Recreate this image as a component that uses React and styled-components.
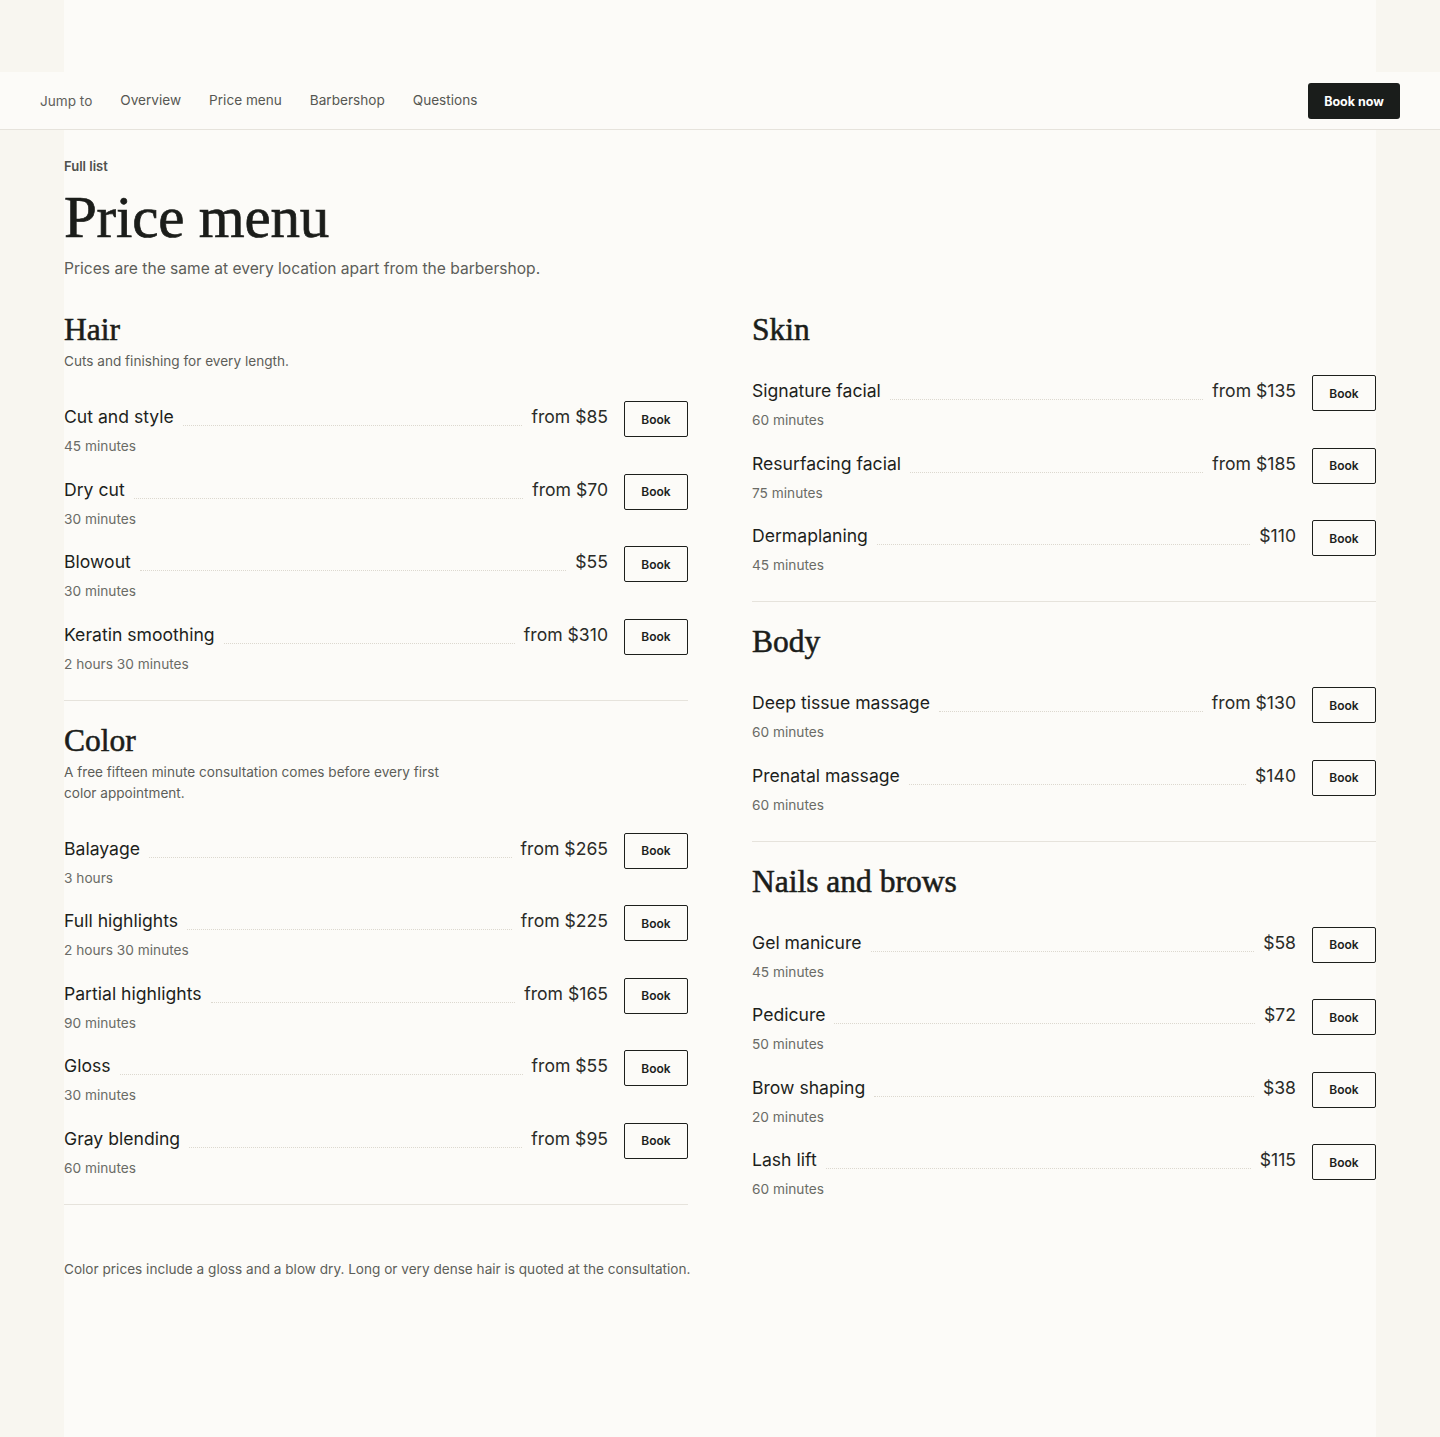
import React from "react";
import styled, { createGlobalStyle } from "styled-components";

const GlobalStyle = createGlobalStyle`
  html, body { margin: 0; padding: 0; }
  body {
    background: #f8f6f0;
    font-family: Inter, "Noto Sans", "Liberation Sans", sans-serif;
    color: #1d1f1c;
    -webkit-font-smoothing: antialiased;
  }
  * { box-sizing: border-box; }
`;

const Shell = styled.div`
  min-height: 100vh;
  display: flex;
  flex-direction: column;
`;

const TopBand = styled.div`
  width: 1312px;
  margin: 0 auto;
  height: 72px;
  background: #fcfbf8;
`;

const Nav = styled.nav`
  display: flex;
  align-items: center;
  justify-content: space-between;
  padding: 11px 40px 10px;
  background: #fcfbf8;
  border-bottom: 1px solid #e6e3dc;
`;

const NavLinks = styled.div`
  display: flex;
  align-items: center;
  gap: 28px;
  padding-bottom: 3px;
`;

const NavLink = styled.a`
  font-size: 13.6px;
  line-height: 20px;
  color: ${(p) => (p.$muted ? "#5f605b" : "#565752")};
  text-decoration: none;
  transform: translateY(${(p) => (p.$muted ? "1px" : "0")});
`;

const BookNow = styled.button`
  width: 92px;
  height: 36px;
  border: none;
  border-radius: 3px;
  background: #1a1d1b;
  color: #ffffff;
  font-family: inherit;
  font-size: 12.5px;
  font-weight: 700;
  cursor: pointer;
`;

const Main = styled.main`
  flex: 1;
  width: 1312px;
  margin: 0 auto;
  background: #fcfbf8;
  padding: 27px 0 120px;
`;

const Eyebrow = styled.div`
  font-size: 13px;
  line-height: 18px;
  font-weight: 600;
  color: #50514d;
`;

const Title = styled.h1`
  margin: 10px 0 0;
  font-family: "Liberation Serif", "Times New Roman", serif;
  font-weight: 400;
  font-size: 59px;
  line-height: 64px;
  letter-spacing: -0.2px;
  color: #1b1d1a;
  -webkit-text-stroke: 0.7px #1b1d1a;
`;

const Lede = styled.p`
  margin: 8px 0 0;
  font-size: 15.6px;
  line-height: 24px;
  color: #5d5e59;
`;

const Columns = styled.div`
  display: grid;
  grid-template-columns: 624px 624px;
  column-gap: 64px;
  align-items: start;
  margin-top: 28px;
`;

const Column = styled.div`
  display: flex;
  flex-direction: column;
`;

const Section = styled.section`
  padding: ${(p) => (p.$first ? "0" : "19px")} 0 ${(p) => (p.$divider ? "26.5px" : "0")};
  border-bottom: ${(p) => (p.$divider ? "1px solid #e6e3dc" : "none")};
`;

const SectionTitle = styled.h2`
  margin: 0 0 -4px;
  font-family: "Liberation Serif", "Times New Roman", serif;
  font-weight: 400;
  font-size: 31.5px;
  line-height: 42px;
  color: #1b1d1a;
  -webkit-text-stroke: 0.55px #1b1d1a;
`;

const SectionNote = styled.p`
  margin: 4px 0 0;
  max-width: 400px;
  font-size: 13.6px;
  line-height: 21px;
  color: #5d5e59;
`;

const List = styled.ul`
  list-style: none;
  margin: ${(p) => (p.$afterNote ? "29px" : "28px")} 0 0;
  padding: 0;
  display: flex;
  flex-direction: column;
  gap: 18px;
`;

const Item = styled.li`
  display: flex;
  flex-direction: column;
`;

const ItemLine = styled.div`
  display: flex;
  align-items: center;
  height: 36px;
`;

const Name = styled.span`
  font-size: 17.6px;
  line-height: 24px;
  color: #1d1f1c;
  white-space: nowrap;
  transform: translateY(-2px);
`;

const Leader = styled.span`
  flex: 1;
  margin: 13px 9px 0;
  border-bottom: 1px dotted #dcd8cf;
`;

const Price = styled.span`
  font-size: 17.6px;
  line-height: 24px;
  color: #2a2b28;
  white-space: nowrap;
  transform: translateY(-2px);
`;

const BookButton = styled.button`
  margin-left: 16px;
  width: 64px;
  height: 36px;
  flex: none;
  background: transparent;
  border: 1px solid #1d1f1c;
  border-radius: 2px;
  font-family: inherit;
  font-size: 12px;
  font-weight: 600;
  color: #1d1f1c;
  cursor: pointer;
`;

const Duration = styled.span`
  font-size: 13.7px;
  line-height: 18.5px;
  color: #6a6b66;
`;

const Footnote = styled.p`
  margin: 54px 0 0;
  font-size: 13.6px;
  line-height: 21px;
  color: #5d5e59;
`;

const leftColumn = [
  {
    title: "Hair",
    note: "Cuts and finishing for every length.",
    items: [
      ["Cut and style", "45 minutes", "from $85"],
      ["Dry cut", "30 minutes", "from $70"],
      ["Blowout", "30 minutes", "$55"],
      ["Keratin smoothing", "2 hours 30 minutes", "from $310"],
    ],
    divider: true,
  },
  {
    title: "Color",
    note: "A free fifteen minute consultation comes before every first color appointment.",
    items: [
      ["Balayage", "3 hours", "from $265"],
      ["Full highlights", "2 hours 30 minutes", "from $225"],
      ["Partial highlights", "90 minutes", "from $165"],
      ["Gloss", "30 minutes", "from $55"],
      ["Gray blending", "60 minutes", "from $95"],
    ],
    divider: true,
  },
];

const rightColumn = [
  {
    title: "Skin",
    items: [
      ["Signature facial", "60 minutes", "from $135"],
      ["Resurfacing facial", "75 minutes", "from $185"],
      ["Dermaplaning", "45 minutes", "$110"],
    ],
    divider: true,
  },
  {
    title: "Body",
    items: [
      ["Deep tissue massage", "60 minutes", "from $130"],
      ["Prenatal massage", "60 minutes", "$140"],
    ],
    divider: true,
  },
  {
    title: "Nails and brows",
    items: [
      ["Gel manicure", "45 minutes", "$58"],
      ["Pedicure", "50 minutes", "$72"],
      ["Brow shaping", "20 minutes", "$38"],
      ["Lash lift", "60 minutes", "$115"],
    ],
    divider: false,
  },
];

function MenuSection({ section, first }) {
  return (
    <Section $first={first} $divider={section.divider}>
      <SectionTitle>{section.title}</SectionTitle>
      {section.note && <SectionNote>{section.note}</SectionNote>}
      <List $afterNote={!!section.note}>
        {section.items.map(([name, duration, price]) => (
          <Item key={name}>
            <ItemLine>
              <Name>{name}</Name>
              <Leader />
              <Price>{price}</Price>
              <BookButton>Book</BookButton>
            </ItemLine>
            <Duration>{duration}</Duration>
          </Item>
        ))}
      </List>
    </Section>
  );
}

export default function App() {
  return (
    <>
      <GlobalStyle />
      <Shell>
        <TopBand />
        <Nav>
          <NavLinks>
            <NavLink $muted>Jump to</NavLink>
            <NavLink href="#overview">Overview</NavLink>
            <NavLink href="#prices">Price menu</NavLink>
            <NavLink href="#barbershop">Barbershop</NavLink>
            <NavLink href="#questions">Questions</NavLink>
          </NavLinks>
          <BookNow>Book now</BookNow>
        </Nav>
        <Main>
          <Eyebrow>Full list</Eyebrow>
          <Title>Price menu</Title>
          <Lede>Prices are the same at every location apart from the barbershop.</Lede>
          <Columns>
            <Column>
              {leftColumn.map((s, i) => (
                <MenuSection key={s.title} section={s} first={i === 0} />
              ))}
            </Column>
            <Column>
              {rightColumn.map((s, i) => (
                <MenuSection key={s.title} section={s} first={i === 0} />
              ))}
            </Column>
          </Columns>
          <Footnote>
            Color prices include a gloss and a blow dry. Long or very dense hair is quoted at the consultation.
          </Footnote>
        </Main>
      </Shell>
    </>
  );
}
